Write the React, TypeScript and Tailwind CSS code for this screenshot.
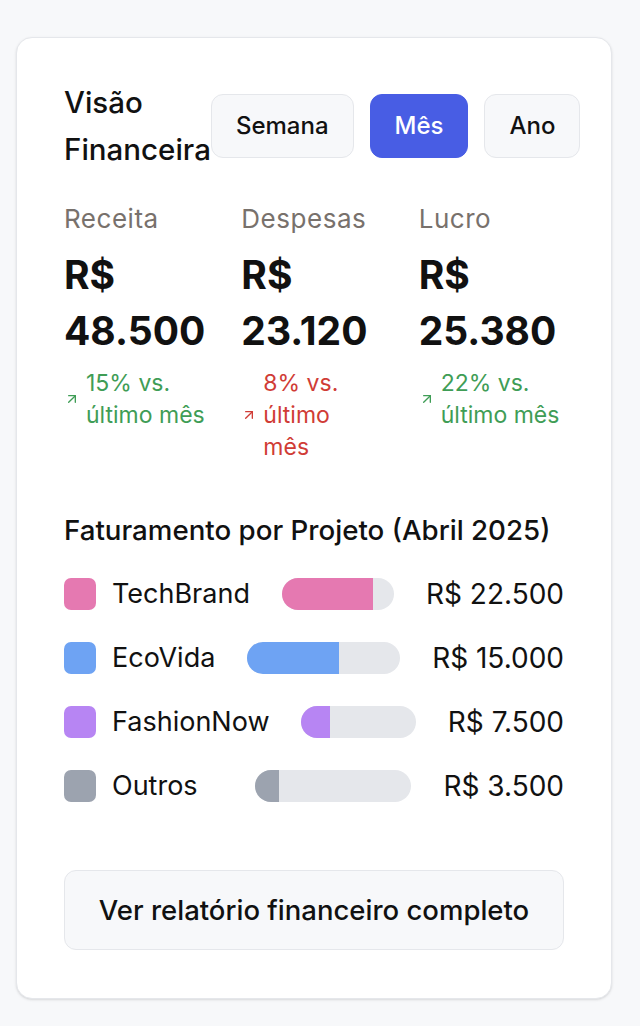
import React from 'react';
import { ArrowUpRight } from 'lucide-react';

type Period = 'Semana' | 'Mês' | 'Ano';

const metrics = [
  { label: 'Receita', value: '48.500', change: '15% vs. último mês', tone: 'text-[#3f9d56]', narrow: false },
  { label: 'Despesas', value: '23.120', change: '8% vs. último mês', tone: 'text-[#d03c36]', narrow: true },
  { label: 'Lucro', value: '25.380', change: '22% vs. último mês', tone: 'text-[#3f9d56]', narrow: false },
];

const projects = [
  { name: 'TechBrand', value: 'R$ 22.500', pct: 81, swatch: 'bg-[#e579b1]' },
  { name: 'EcoVida', value: 'R$ 15.000', pct: 60, swatch: 'bg-[#6ea3f3]' },
  { name: 'FashionNow', value: 'R$ 7.500', pct: 25, swatch: 'bg-[#b785f3]' },
  { name: 'Outros', value: 'R$ 3.500', pct: 15, swatch: 'bg-[#9ca3af]' },
];

export default function App(): React.ReactElement {
  const [period, setPeriod] = React.useState<Period>('Mês');

  return (
    <div className="min-h-screen bg-[#f7f8fa] pt-[37px] pl-4 font-['Inter',sans-serif] text-[#111]">
      <div className="w-[596px] bg-white border border-[#e5e7eb] rounded-[16px] shadow-sm pt-[41px] px-[47px] pb-[48px]">
        <div className="flex items-center justify-between">
          <h2 className="text-[29.5px] leading-[47px] font-medium">Visão Financeira</h2>
          <div className="flex gap-4 shrink-0">
            {(['Semana', 'Mês', 'Ano'] as Period[]).map((p) => (
              <button
                key={p}
                onClick={() => setPeriod(p)}
                className={
                  period === p
                    ? 'px-6 py-[11px] text-[24px] leading-[40px] font-medium rounded-[12px] border border-[#485de4] bg-[#485de4] text-white'
                    : 'px-6 py-[11px] text-[24px] leading-[40px] font-medium rounded-[12px] border border-[#e5e7eb] bg-[#f7f8fa] text-[#111]'
                }
              >
                {p}
              </button>
            ))}
          </div>
        </div>

        <div className="grid grid-cols-3 gap-8 mt-[30px]">
          {metrics.map((m) => (
            <div key={m.label}>
              <p className="text-[26px] leading-[32px] tracking-[0.02em] text-[#78716c]">{m.label}</p>
              <p className="mt-3 text-[39px] leading-[56px] font-bold">R$ {m.value}</p>
              <div className={`mt-2 flex items-center gap-1.5 ${m.tone}`}>
                <ArrowUpRight className="w-4 h-4 shrink-0" strokeWidth={2} />
                <span className={`text-[23px] leading-[32px] ${m.narrow ? 'max-w-[100px]' : ''}`}>{m.change}</span>
              </div>
            </div>
          ))}
        </div>

        <h3 className="mt-[47px] text-[27.7px] leading-[40px] font-medium">Faturamento por Projeto (Abril 2025)</h3>

        <div className="mt-6 space-y-6">
          {projects.map((p) => (
            <div key={p.name} className="flex items-center h-10">
              <div className="flex items-center gap-4">
                <span className={`w-8 h-8 rounded-[7px] ${p.swatch}`} />
                <span className="text-[27px] leading-[40px]">{p.name}</span>
              </div>
              <div className="flex-1 mx-8 flex justify-end">
                <div className="w-full max-w-[156px] h-8 rounded-full bg-[#e5e7eb] overflow-hidden">
                  <div className={`h-full ${p.swatch}`} style={{ width: `${p.pct}%` }} />
                </div>
              </div>
              <span className="text-[28px] leading-[40px]">{p.value}</span>
            </div>
          ))}
        </div>

        <button className="mt-16 w-full py-[19px] border border-[#e5e7eb] bg-[#f7f8fa] rounded-[12px] text-[27.5px] leading-[40px] font-medium">
          Ver relatório financeiro completo
        </button>
      </div>
    </div>
  );
}
